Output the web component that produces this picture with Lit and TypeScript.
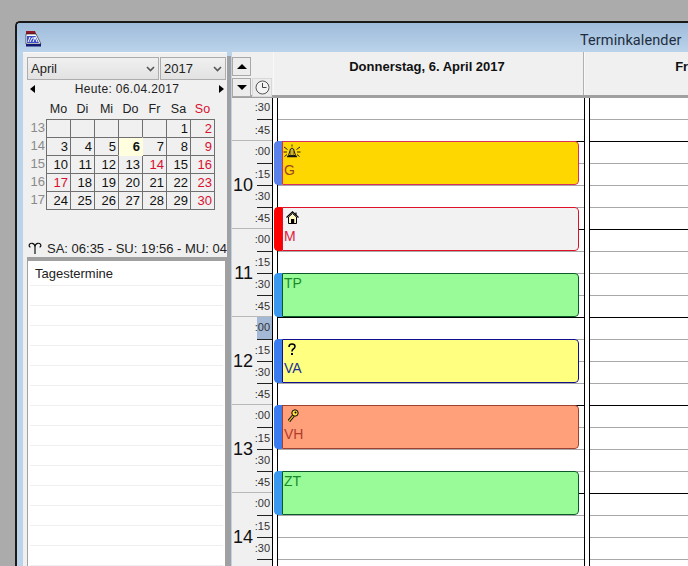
import { LitElement, html, css, svg } from "lit";
import { customElement } from "lit/decorators.js";

const alarm = svg`<svg width="18" height="15" viewBox="0 0 18 15"><path d="M5.500 11.500 L7.500 5 Q9 3 10.500 5 L12.500 11.500 Z" fill="#ffe040" stroke="#111" stroke-width="1"/><path d="M7.500 6.500v5M9 5v6.500M10.500 6.500v5" stroke="#6a5a10" stroke-width=".7"/><path d="M4 12.500h10" stroke="#111" stroke-width="1.400"/><path d="M1 3l3.500 2.500M0.500 8h3.500M1.500 12.500l2.500-2M17 3l-3.500 2.500M17.500 8h-3.500M16.500 12.500l-2.500-2M9 0.500v2" stroke="#222" stroke-width="1"/></svg>`;
const house = svg`<svg width="13" height="13" viewBox="0 0 13 13"><path d="M0.500 6.500 L6.500 0.800 L12.500 6.500 M10 1.500v2.500" fill="none" stroke="#000" stroke-width="1.200"/><path d="M2.500 6 L6.500 2.500 L10.500 6 V12.500 H2.500 Z" fill="#fff7c0" stroke="#000"/><rect x="5" y="8" width="3.200" height="4.500" fill="#000"/></svg>`;
const question = svg`<svg width="8" height="13" viewBox="0 0 8 13"><path d="M1 4 Q1 1 4 1 Q7 1 7 3.500 Q7 5 5.300 6 Q4 6.800 4 8.500" fill="none" stroke="#000" stroke-width="1.500"/><rect x="3" y="10" width="2" height="2" fill="#000"/></svg>`;
const key = svg`<svg width="11" height="13" viewBox="0 0 11 13"><path d="M1 12 L5.500 6.500" stroke="#000" stroke-width="3"/><path d="M1 12 L5.500 6.500" stroke="#e8c020" stroke-width="1.200"/><circle cx="7" cy="4" r="3.200" fill="#ffe040" stroke="#000"/><circle cx="7.500" cy="3.500" r="1" fill="#000"/></svg>`;
const logo = svg`<svg width="17" height="17" viewBox="0 0 17 17"><path d="M1 1h9l1.500 4H1z" fill="#8c1c2c"/><path d="M1 4h10l5 10H1z" fill="#fff" stroke="#111" stroke-width=".6"/><path d="M2 6h8.500l3.500 7H2z" fill="#3a50c8"/><path d="M3 12l2-5M5 12l2-4h2M8 12l2-5 2 5" stroke="#fff" fill="none" stroke-width="1"/><path d="M1 14h15v2.500H1z" fill="#101a70"/></svg>`;
const chev = svg`<svg width="9" height="6" viewBox="0 0 9 6"><path d="M1 1l3.500 3.500L8 1" fill="none" stroke="#555" stroke-width="1.600"/></svg>`;
const clock = svg`<svg width="15" height="15" viewBox="0 0 15 15"><circle cx="7.500" cy="7.500" r="6.500" fill="#f4f4f4" stroke="#555"/><path d="M7.500 3v4.500h4" fill="none" stroke="#444"/></svg>`;
const aries = svg`<svg width="14" height="13" viewBox="0 0 14 13"><path d="M7 12 V5 C7 1 2 0 1.200 3 C1 4 1.500 5 2.500 5 M7 5 C7 1 12 0 12.800 3 C13 4 12.500 5 11.500 5" fill="none" stroke="#111" stroke-width="1.200"/></svg>`;

type Cell = { d?: number; red?: boolean; today?: boolean };
const weeks: { w: number; days: Cell[] }[] = [
  { w: 13, days: [{}, {}, {}, {}, {}, { d: 1 }, { d: 2, red: true }] },
  { w: 14, days: [{ d: 3 }, { d: 4 }, { d: 5 }, { d: 6, today: true }, { d: 7 }, { d: 8 }, { d: 9, red: true }] },
  { w: 15, days: [{ d: 10 }, { d: 11 }, { d: 12 }, { d: 13 }, { d: 14, red: true }, { d: 15 }, { d: 16, red: true }] },
  { w: 16, days: [{ d: 17, red: true }, { d: 18 }, { d: 19 }, { d: 20 }, { d: 21 }, { d: 22 }, { d: 23, red: true }] },
  { w: 17, days: [{ d: 24 }, { d: 25 }, { d: 26 }, { d: 27 }, { d: 28 }, { d: 29 }, { d: 30, red: true }] },
];
const dayNames = ["Mo", "Di", "Mi", "Do", "Fr", "Sa", "So"];

const hours: { h: string; q: string[] }[] = [
  { h: "", q: [":30", ":45"] },
  { h: "10", q: [":00", ":15", ":30", ":45"] },
  { h: "11", q: [":00", ":15", ":30", ":45"] },
  { h: "12", q: [":00", ":15", ":30", ":45"] },
  { h: "13", q: [":00", ":15", ":30", ":45"] },
  { h: "14", q: [":00", ":15", ":30", ":45"] },
];

const events = [
  { cls: "g", top: 43, label: "G", icon: alarm, ox: -3 },
  { cls: "m", top: 109, label: "M", icon: house, ox: 0 },
  { cls: "t", top: 175, label: "TP", icon: null, ox: 0 },
  { cls: "v", top: 241, label: "VA", icon: question, ox: 2 },
  { cls: "h", top: 307, label: "VH", icon: key, ox: 2 },
  { cls: "t", top: 373, label: "ZT", icon: null, ox: 0 },
];

@customElement("app-root")
export class AppRoot extends LitElement {
  static styles = css`
    :host { display: block; width: 688px; height: 566px; overflow: hidden; background: #ababab; font-family: "Liberation Sans", Arial, sans-serif; }
    * { box-sizing: border-box; }
    .page { width: 688px; height: 566px; padding: 21px 0 0 15px; overflow: hidden; }
    .win { height: 600px; width: 720px; border: 1px solid #1a1a1a; border-width: 2px 0 0 2px; border-top-left-radius: 5px; display: flex; flex-direction: column; overflow: hidden; background: #bcd4ea; }
    .title { height: 29px; flex: none; background: linear-gradient(#9fbcdb, #bbd3ea); display: flex; align-items: center; padding: 0 0 0 8px; }
    .title .logo { display: flex; margin-top: 2px; }
    .title .t { margin-left: 538px; font: 14.500px Roboto, "Noto Sans", sans-serif; color: #1e2e40; white-space: nowrap; letter-spacing: 0.1px; margin-top: 6px; }
    .body { flex: 1; display: flex; padding-left: 6px; min-height: 0; }
    .left { width: 204px; flex: none; background: #f0f0f0; border-top: 1px solid #f8f8f8; padding: 4px 0 0 4px; display: flex; flex-direction: column; overflow: hidden; }
    .split { width: 4px; flex: none; background: #a0a0a0; margin-top: 4px; }
    .selects { display: flex; gap: 1px; height: 23px; width: 199px; flex: none; }
    .sel { background: linear-gradient(#f0f0f0, #e2e2e2); border: 1px solid #adadad; display: flex; align-items: center; justify-content: space-between; padding: 0 3px 0 3px; font-size: 13px; color: #222; }
    .sel.month { width: 132px; }
    .sel.year { flex: 1; }
    .todayline { display: flex; height: 18px; width: 199px; align-items: center; justify-content: space-between; padding: 0 2px 0 3px; font-size: 12px; color: #222; flex: none; letter-spacing: .33px; }
    .arrowl { width: 0; height: 0; border: 4px solid transparent; border-left: 0; border-right: 5px solid #000; }
    .arrowr { width: 0; height: 0; border: 4px solid transparent; border-right: 0; border-left: 5px solid #000; }
    .cal { display: grid; grid-template-columns: 19px repeat(7, 24px); grid-auto-rows: 18px; font-size: 13px; color: #111; flex: none; height: 118px; margin-top: 3px; }
    .cal .dn { text-align: center; height: 17px; line-height: 17px; padding-left: 1px; font-size: 12.500px; color: #222; }
    .cal .hd { height: 18px; }
    .cal .dn.red, .cal .c.red { color: #d81030; }
    .cal .wk { color: #8a8a8a; text-align: right; padding-right: 1px; line-height: 18px; }
    .cal .c { border: 1px solid #707070; margin: 0 -1px -1px 0; text-align: right; padding-right: 2px; line-height: 17px; background: #f0f0f0; }
    .cal .c.now { background: #ffffe0; font-weight: bold; border-color: #707070 transparent transparent #707070; position: relative; z-index: 1; }
    .sun { display: flex; align-items: center; gap: 5px; height: 18px; margin-top: 20px; padding-left: 1px; font-size: 13px; color: #222; white-space: nowrap; flex: none; overflow: hidden; width: 200px; }
    .sun svg { flex: none; }
    .list { width: 200px; flex: 1; background: #fff; border: 1px solid #a0a0a0; border-top-width: 4px; border-right-width: 2px; padding: 0 2px; }
    .list .row { height: 20px; border-bottom: 1px solid #efefef; }
    .list .row.first { height: 25px; padding-left: 5px; line-height: 26px; font-size: 13px; color: #222; }
    .main { flex: 1; display: flex; flex-direction: column; margin-left: 1px; min-width: 0; }
    .head { display: flex; height: 46px; flex: none; border-bottom: 3px solid #a0a0a0; background: #f0f0f0; }
    .btns { width: 41px; flex: none; display: grid; grid-template-columns: 19px 20px; grid-template-rows: 19px 19px; gap: 2px 1px; padding: 5px 0 0 0; background: #f0f0f0; }
    .btn { border: 1px solid #a8a8a8; background: #ececec; display: flex; align-items: center; justify-content: center; }
    .btn.ck { border-color: #d8d8d8; }
    .up { width: 0; height: 0; border: 5px solid transparent; border-top: 0; border-bottom: 5px solid #000; }
    .down { width: 0; height: 0; border: 5px solid transparent; border-bottom: 0; border-top: 5px solid #000; }
    .dh { width: 311px; flex: none; border-left: 1px solid #f8f8f8; border-right: 1px solid #b0b0b0; text-align: center; font-size: 13px; font-weight: bold; color: #111; padding: 7px 3px 0 0; line-height: 15px; white-space: nowrap; overflow: hidden; }
    .dh.next { width: 311px; border-right: 0; }
    .sched { flex: 1; display: flex; min-height: 0; overflow: hidden; background: #fff; }
    .times { width: 40px; flex: none; background: #f0f0f0; display: flex; flex-direction: column; margin-top: -1px; }
    .hr { display: flex; flex: none; border-top: 1px solid #b8b8b8; margin-top: -1px; }
    .hr:first-child { border-top: 0; margin-top: 0; }
    .hr .num { width: 25px; flex: none; display: flex; align-items: center; justify-content: flex-end; font-size: 18px; color: #111; padding-right: 4px; }
    .hr .qs { width: 15px; flex: none; margin-right: 1px; }
    .q { height: 22px; border-top: 1px solid #222; font-size: 11px; color: #333; display: flex; justify-content: flex-end; line-height: 21px; padding-right: 2px; white-space: nowrap; }
    .q.first { border-top: 0; }
    .q.cur { background: #a3b9d6; }
    .grid { position: relative; flex: 1; display: flex; min-width: 0; border-left: 1px solid #000; }
    .gut { width: 5px; flex: none; border-right: 1px solid #000; background: #fff; }
    .gut.b { width: 6px; border-left: 1px solid #000; }
    .col { width: 306px; flex: none; }
    .slot { height: 22px; border-bottom: 1px solid #a8a8a8; }
    .slot.hl { border-bottom-color: #000; }
    .ev { position: absolute; left: 1px; width: 305px; height: 44px; border-radius: 4px; display: flex; overflow: hidden; }
    .ev .bar { width: 8px; flex: none; border-radius: 4px 0 0 4px; }
    .ev .box { flex: 1; border: 1px solid; border-radius: 0 4px 4px 0; padding-left: 1px; display: flex; flex-direction: column; font-size: 14px; line-height: 16px; }
    .ev .ic { height: 19px; display: flex; align-items: center; padding-left: 2px; flex: none; }
    .ev .tx { padding-top: 1px; }
    .ev.g .bar { background: #5a80ea; } .ev.g .box { background: #ffd700; border-color: #d8305c; color: #a04020; }
    .ev.m .bar { background: #ff0000; } .ev.m .box { background: #f2f2f2; border-color: #e01028; color: #e0203c; }
    .ev.t .bar { background: #3a98ee; } .ev.t .box { background: #98fb98; border-color: #0a5a2a; color: #188a28; }
    .ev.v .bar { background: #3a7cf0; } .ev.v .box { background: #ffff80; border-color: #101090; color: #20309a; }
    .ev.h .bar { background: #3a7cf0; } .ev.h .box { background: #ffa07a; border-color: #a04030; color: #b03c2c; }
  `;

  render() {
    const slots = hours.flatMap((b) => b.q.map((q) => q));
    return html`<div class="page"><div class="win">
      <div class="title"><span class="logo">${logo}</span><span class="t">Terminkalender</span></div>
      <div class="body">
        <div class="left">
          <div class="selects">
            <div class="sel month"><span>April</span>${chev}</div>
            <div class="sel year"><span>2017</span>${chev}</div>
          </div>
          <div class="todayline"><span class="arrowl"></span><span>Heute: 06.04.2017</span><span class="arrowr"></span></div>
          <div class="cal">
            <div class="hd"></div>
            ${dayNames.map((d) => html`<div class="dn ${d === "So" ? "red" : ""}">${d}</div>`)}
            ${weeks.map((w) => html`<div class="wk">${w.w}</div>${w.days.map(
              (c) => html`<div class="c ${c.red ? "red" : ""} ${c.today ? "now" : ""}">${c.d ?? ""}</div>`
            )}`)}
          </div>
          <div class="sun">${aries}<span>SA: 06:35 - SU: 19:56 - MU: 04:45 - MO: 15:20</span></div>
          <div class="list">
            <div class="row first">Tagestermine</div>
            ${Array.from({ length: 14 }).map(() => html`<div class="row"></div>`)}
          </div>
        </div>
        <div class="split"></div>
        <div class="main">
          <div class="head">
            <div class="btns">
              <div class="btn"><span class="up"></span></div><div></div>
              <div class="btn"><span class="down"></span></div><div class="btn ck">${clock}</div>
            </div>
            <div class="dh">Donnerstag, 6. April 2017</div>
            <div class="dh next">Freitag, 7. April 2017</div>
          </div>
          <div class="sched">
            <div class="times">
              ${hours.map((b) => html`<div class="hr">
                <div class="num">${b.h}</div>
                <div class="qs">${b.q.map((q, i) => html`<div class="q ${i === 0 ? "first" : ""} ${b.h === "12" && i === 0 ? "cur" : ""}"><span>${q}</span></div>`)}</div>
              </div>`)}
            </div>
            <div class="grid">
              <div class="gut"></div>
              <div class="col">${slots.map((_, i) => html`<div class="slot ${(i + 3) % 4 === 0 ? "hl" : ""}"></div>`)}</div>
              <div class="gut b"></div>
              <div class="col">${slots.map((_, i) => html`<div class="slot ${(i + 3) % 4 === 0 ? "hl" : ""}"></div>`)}</div>
              ${events.map((e) => html`<div class="ev ${e.cls}" style="top:${e.top}px">
                <div class="bar"></div>
                <div class="box">${e.icon ? html`<div class="ic" style="margin-left:${e.ox}px">${e.icon}</div>` : ""}<div class="tx">${e.label}</div></div>
              </div>`)}
            </div>
          </div>
        </div>
      </div>
    </div></div>`;
  }
}
